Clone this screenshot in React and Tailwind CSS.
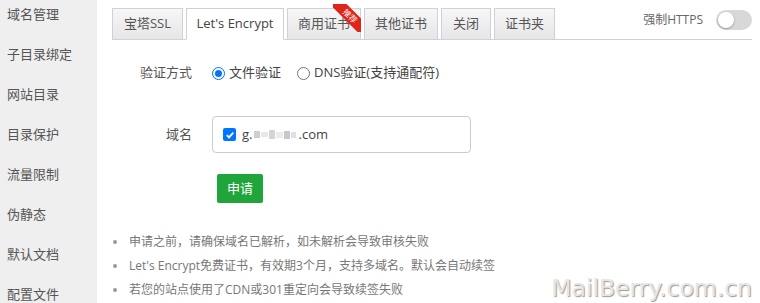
const sideItems = ["域名管理", "子目录绑定", "网站目录", "目录保护", "流量限制", "伪静态", "默认文档", "配置文件"];

const tabs = [
  { name: "宝塔SSL", w: "w-[71px]" },
  { name: "Let's Encrypt", w: "w-[98px]", active: true },
  { name: "商用证书", w: "w-[74px]", badge: true },
  { name: "其他证书", w: "w-[74px]" },
  { name: "关闭", w: "w-[50px]" },
  { name: "证书夹", w: "w-[61px]" },
];

const tips = [
  "申请之前，请确保域名已解析，如未解析会导致审核失败",
  "Let's Encrypt免费证书，有效期3个月，支持多域名。默认会自动续签",
  "若您的站点使用了CDN或301重定向会导致续签失败",
];

function Radio({ checked, label }) {
  return (
    <label className="flex items-center gap-[4px]">
      <span
        className={
          checked
            ? "w-[13px] h-[13px] rounded-full border-[1.5px] border-[#0075ff] flex items-center justify-center"
            : "w-[13px] h-[13px] rounded-full border border-[#767676] bg-white"
        }
      >
        {checked && <span className="w-[7px] h-[7px] rounded-full bg-[#0075ff]" />}
      </span>
      <span>{label}</span>
    </label>
  );
}

export default function App() {
  return (
    <div className="relative w-[760px] h-[303px] flex overflow-hidden bg-white text-[13px] text-[#555] font-['Open_Sans','Noto_Sans_CJK_SC',sans-serif]">
      {/* 侧边栏 */}
      <div className="w-[97px] shrink-0 bg-[#efefef] pl-[7px]">
        <div className="-mt-[6px]">
          {sideItems.map((s) => (
            <div key={s} className="h-[40px] leading-[40px] text-[13px] text-[#555]">
              {s}
            </div>
          ))}
        </div>
      </div>

      {/* 主区域 */}
      <div className="flex-1 pl-[15px] pr-[8px] pt-[8px]">
        <div className="flex items-start border-b border-[#d0cfe0] h-[32px]">
          <div className="flex gap-[3px]">
            {tabs.map((t) => (
              <div
                key={t.name}
                className={
                  "relative h-[32px] flex items-center justify-center border border-[#d0cfe0] text-[13px] " +
                  t.w +
                  (t.active
                    ? " bg-white border-b-white text-[#444]"
                    : " h-[31px] bg-gradient-to-b from-[#f7f7f7] to-[#e6e6e6] text-[#555]")
                }
              >
                {t.name}
                {t.badge && (
                  <div className="absolute -top-[5px] -right-[1px] w-[28px] h-[28px] overflow-hidden">
                    <div className="absolute top-[6px] -right-[12px] w-[46px] h-[12px] bg-[#e2231a] rotate-45 flex items-center justify-center text-[8px] leading-none text-white">
                      推荐
                    </div>
                  </div>
                )}
              </div>
            ))}
          </div>
          <div className="ml-auto flex items-center gap-[13px] mt-[2px]">
            <span className="text-[12px] text-[#666]">强制HTTPS</span>
            <div className="w-[36px] h-[20px] rounded-full bg-[#d8d8d8] p-[2px] flex items-center">
              <div className="w-[16px] h-[16px] rounded-full bg-white shadow-[0_1px_2px_rgba(0,0,0,0.3)]" />
            </div>
          </div>
        </div>

        {/* 验证方式 */}
        <div className="flex items-center h-[20px] mt-[23px]">
          <div className="w-[80px] text-right text-[#555]">验证方式</div>
          <div className="ml-[20px] flex items-center gap-[16px] text-[#444]">
            <Radio checked label="文件验证" />
            <Radio label="DNS验证(支持通配符)" />
          </div>
        </div>

        {/* 域名 */}
        <div className="flex items-center mt-[33px]">
          <div className="w-[80px] text-right text-[#555]">域名</div>
          <div className="ml-[20px] w-[259px] h-[37px] border border-[#ccc] rounded-[4px] flex items-center pl-[10px] gap-[6px]">
            <span className="w-[13px] h-[13px] rounded-[2px] bg-[#0075ff] flex items-center justify-center">
              <svg width="10" height="10" viewBox="0 0 10 10">
                <path d="M1.8 5.2 L4 7.4 L8.3 2.6" fill="none" stroke="white" strokeWidth="1.8" />
              </svg>
            </span>
            <span className="flex items-center text-[#444]">
              g.
              <span className="inline-flex items-center gap-[1px] mx-[2px]">
                <span className="w-[6px] h-[7px] bg-[#cfcfcf]" />
                <span className="w-[7px] h-[5px] bg-[#e8e8e8]" />
                <span className="w-[6px] h-[9px] bg-[#d4d4d4]" />
                <span className="w-[7px] h-[6px] bg-[#ececec]" />
                <span className="w-[6px] h-[8px] bg-[#c8c8c8]" />
                <span className="w-[5px] h-[6px] bg-[#e0e0e0]" />
              </span>
              .com
            </span>
          </div>
        </div>

        {/* 申请按钮 */}
        <button className="ml-[105px] mt-[21px] w-[46px] h-[29px] rounded-[2px] bg-[#20a53a] text-white text-[13px] flex items-center justify-center">
          申请
        </button>

        {/* 提示 */}
        <ul className="mt-[27px]">
          {tips.map((t) => (
            <li key={t} className="flex items-center h-[24px] text-[12px] text-[#777]">
              <span className="ml-[1px] w-[4px] h-[4px] rounded-full bg-[#999]" />
              <span className="ml-[12px]">{t}</span>
            </li>
          ))}
        </ul>
      </div>

      {/* 水印 */}
      <div className="absolute right-[8px] bottom-[3px] text-[23.5px] leading-none text-[#e6e6e6] font-['DejaVu_Sans',sans-serif] [text-shadow:1px_1px_1px_#999]">
        MailBerry.com.cn
      </div>
    </div>
  );
}
